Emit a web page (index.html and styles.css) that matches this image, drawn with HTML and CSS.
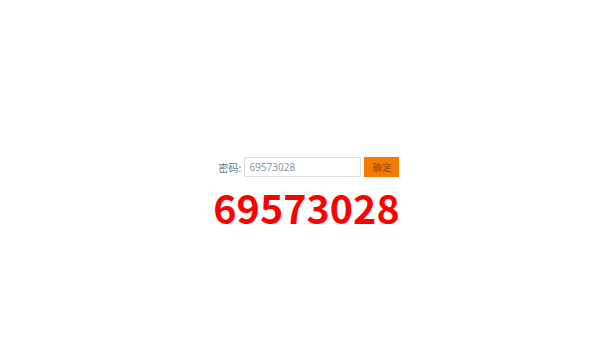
FILE: index.html
```html
<!DOCTYPE html>
<html lang="zh-CN">
<head>
    <meta charset="UTF-8">
    <meta name="viewport" content="width=device-width, initial-scale=1.0">
    <title>密码</title>
    <link rel="stylesheet" href="styles.css">
</head>
<body>
    <div class="wrap">
        <form class="pass-form">
            <label for="pwd">密码:</label>
            <input type="text" id="pwd" value="69573028">
            <button type="button">确定</button>
        </form>
        <div class="result">69573028</div>
    </div>
</body>
</html>
```

FILE: styles.css
```css
body {
    margin: 0;
    background: #fff;
    font-family: "Noto Sans CJK SC", "Noto Sans", sans-serif;
}

.wrap {
    padding-top: 157px;
    text-align: center;
}

.pass-form {
    display: flex;
    justify-content: center;
    align-items: center;
    margin: 0;
    padding-left: 18px;
}

label {
    font-size: 10px;
    color: #687683;
    margin-right: 3px;
}

input {
    width: 117px;
    height: 20px;
    box-sizing: border-box;
    border: 1px solid #dcdcdc;
    padding: 0 4px;
    font-family: "Noto Sans", sans-serif;
    font-size: 10px;
    color: #8a97a3;
    outline: none;
}

button {
    margin-left: 3px;
    width: 35px;
    height: 20px;
    border: none;
    background: #f47b00;
    color: #8a4b10;
    font-family: "Noto Sans CJK SC", sans-serif;
    font-size: 9.5px;
    padding: 0;
}

.result {
    margin-top: 10px;
    padding-left: 13px;
    font-size: 39.5px;
    font-weight: bold;
    line-height: 40px;
    color: #ff0000;
}
```
